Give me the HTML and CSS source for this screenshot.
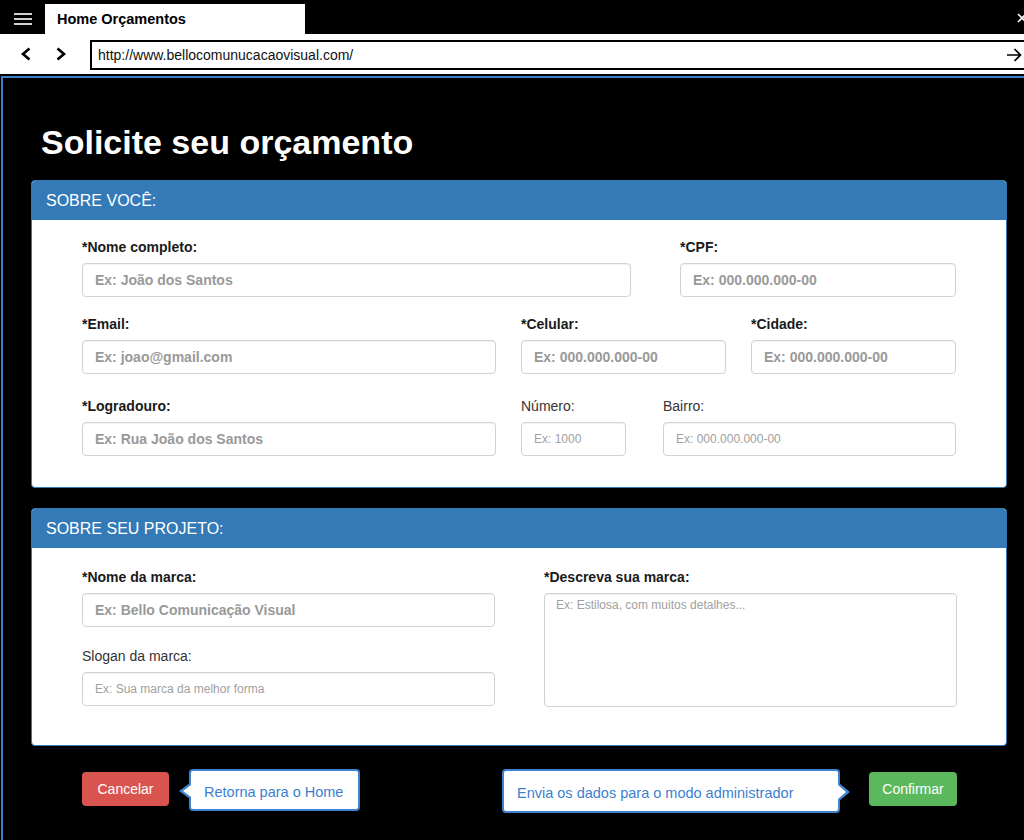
FILE: index.html
```html
<!DOCTYPE html>
<html lang="pt-BR">
<head>
<meta charset="utf-8">
<title>Home Orçamentos</title>
<link rel="stylesheet" href="styles.css">
</head>
<body>
<div class="browser">
  <header class="tabbar">
    <div class="menu"><span></span><span></span><span></span></div>
    <div class="tab">Home Orçamentos</div>
    <svg class="close" width="10" height="10" viewBox="0 0 10 10"><path d="M1 1L9 9M9 1L1 9" stroke="#fff" stroke-width="1.6" fill="none"/></svg>
  </header>
  <nav class="toolbar">
    <svg class="nav-btn back" width="12" height="14" viewBox="0 0 12 14"><polyline points="9.5,1.5 3,7 9.5,12.5" fill="none" stroke="#000" stroke-width="2.6"/></svg>
    <svg class="nav-btn fwd" width="12" height="14" viewBox="0 0 12 14"><polyline points="2.5,1.5 9,7 2.5,12.5" fill="none" stroke="#000" stroke-width="2.6"/></svg>
    <div class="address">
      <span class="url">http://www.bellocomunucacaovisual.com/</span>
      <svg class="go" width="16" height="16" viewBox="0 0 16 16"><path d="M1 8H14.5M8.5 2L14.5 8L8.5 14" fill="none" stroke="#000" stroke-width="1.7"/></svg>
    </div>
  </nav>
  <main class="viewport">
    <h1 class="title">Solicite seu orçamento</h1>

    <section class="panel">
      <div class="panel-heading">SOBRE VOCÊ:</div>
      <div class="panel-body body-about">
        <div class="row row-1">
          <div class="field w-nome"><label class="label">*Nome completo:</label><input class="input" placeholder="Ex: João dos Santos"></div>
          <div class="field w-cpf"><label class="label">*CPF:</label><input class="input" placeholder="Ex: 000.000.000-00"></div>
        </div>
        <div class="row row-2">
          <div class="field w-wide"><label class="label">*Email:</label><input class="input" placeholder="Ex: joao@gmail.com"></div>
          <div class="field w-mid"><label class="label">*Celular:</label><input class="input" placeholder="Ex: 000.000.000-00"></div>
          <div class="field w-mid"><label class="label">*Cidade:</label><input class="input" placeholder="Ex: 000.000.000-00"></div>
        </div>
        <div class="row row-3">
          <div class="field w-wide"><label class="label">*Logradouro:</label><input class="input" placeholder="Ex: Rua João dos Santos"></div>
          <div class="field w-num"><label class="label light">Número:</label><input class="input small" placeholder="Ex: 1000"></div>
          <div class="field w-bairro"><label class="label light">Bairro:</label><input class="input small" placeholder="Ex: 000.000.000-00"></div>
        </div>
      </div>
    </section>

    <section class="panel panel-project">
      <div class="panel-heading">SOBRE SEU PROJETO:</div>
      <div class="panel-body body-project">
        <div class="col">
          <div class="field"><label class="label">*Nome da marca:</label><input class="input" placeholder="Ex: Bello Comunicação Visual"></div>
          <div class="field slogan"><label class="label light">Slogan da marca:</label><input class="input small" placeholder="Ex: Sua marca da melhor forma"></div>
        </div>
        <div class="col">
          <div class="field"><label class="label">*Descreva sua marca:</label><textarea class="input textarea small" placeholder="Ex: Estilosa, com muitos detalhes..."></textarea></div>
        </div>
      </div>
    </section>

    <div class="actions">
      <div class="group">
        <button class="btn btn-cancel">Cancelar</button>
        <div class="tip tip-left">Retorna para o Home</div>
      </div>
      <div class="group">
        <div class="tip tip-right">Envia os dados para o modo administrador</div>
        <button class="btn btn-confirm">Confirmar</button>
      </div>
    </div>
  </main>
</div>
</body>
</html>
```
FILE: styles.css
```css
* { box-sizing: border-box; }

html, body {
  margin: 0;
  padding: 0;
  background: #000;
  font-family: "Liberation Sans", Arial, sans-serif;
}

.browser {
  width: 1024px;
  height: 840px;
  overflow: hidden;
  background: #000;
}

/* ---------- tab bar ---------- */
.tabbar {
  height: 34px;
  display: flex;
  align-items: flex-start;
  background: #000;
  overflow: hidden;
}

.menu {
  width: 45px;
  padding: 13px 0 0 14px;
  display: flex;
  flex-direction: column;
  gap: 3px;
}
.menu span {
  display: block;
  width: 18px;
  height: 2px;
  background: #d0d0d0;
}

.tab {
  margin-top: 4px;
  width: 260px;
  height: 30px;
  background: #fff;
  padding: 1px 0 0 12px;
  line-height: 29px;
  font-size: 14.5px;
  font-weight: bold;
  color: #000;
}

.close {
  margin: 13px -3px 0 auto;
  flex: none;
}

/* ---------- toolbar ---------- */
.toolbar {
  height: 42px;
  background: #fff;
  border-bottom: 2px solid #000;
  display: flex;
  align-items: flex-start;
  overflow: hidden;
}

.nav-btn { flex: none; margin-top: 13px; }
.back { margin-left: 20px; }
.fwd { margin-left: 23px; }

.address {
  flex: none;
  width: 950px;
  margin: 6px 0 0 23px;
  height: 30px;
  border: 2px solid #000;
  display: flex;
  align-items: center;
  padding-left: 6px;
}
.url {
  font-size: 14px;
  color: #111;
}
.go {
  margin-left: auto;
  margin-right: 16px;
  flex: none;
}

/* ---------- viewport ---------- */
.viewport {
  margin-left: 1px;
  border-left: 2px solid #3a7fc9;
  border-top: 2px solid #3a7fc9;
  height: 766px;
  padding: 0 17px 0 28px;
  background: #000;
}

.title {
  margin: 44px 0 18px 10px;
  font-size: 34px;
  line-height: 40px;
  font-weight: bold;
  color: #fff;
}

/* ---------- panels ---------- */
.panel {
  background: #fff;
  border: 1px solid #337ab7;
  border-radius: 4px;
  overflow: hidden;
}
.panel-project { margin-top: 20px; }

.panel-heading {
  height: 39px;
  line-height: 39px;
  background: #337ab7;
  color: #fff;
  font-size: 16px;
  padding: 0 14px;
}

.panel-body {
  padding: 19px 49px 31px 50px;
}

.row {
  display: flex;
  gap: 25px;
}
.row-1 { gap: 49px; }
.row-2 { margin-top: 19px; }
.row-3 { margin-top: 24px; }

.w-nome { width: 549px; }
.w-cpf { width: 276px; }
.w-wide { width: 414px; }
.w-mid { width: 205px; }
.w-num { width: 105px; }
.w-bairro { width: 293px; margin-left: 12px; }

.field {
  display: flex;
  flex-direction: column;
}

.label {
  display: block;
  font-size: 14px;
  line-height: 17px;
  font-weight: bold;
  color: #1a1a1a;
  margin-bottom: 7px;
}
.label.light {
  font-weight: normal;
  color: #333;
}

.input {
  width: 100%;
  height: 34px;
  border: 1px solid #d2d2d2;
  border-radius: 4px;
  box-shadow: inset 0 1px 1px rgba(0,0,0,.06);
  padding: 0 12px;
  font-family: "Liberation Sans", Arial, sans-serif;
  font-size: 14px;
  font-weight: bold;
  color: #555;
  background: #fff;
  outline: none;
}
.input::placeholder {
  color: #999;
  opacity: 1;
}
.input.small {
  font-size: 12px;
  font-weight: normal;
}
.input.small::placeholder { color: #a0a0a0; }

.textarea {
  height: 114px;
  resize: none;
  padding: 3px 11px;
  line-height: 17px;
  display: block;
}

.body-project {
  display: grid;
  grid-template-columns: 413px 413px;
  column-gap: 49px;
  padding: 21px 49px 38px 50px;
}
.slogan { margin-top: 21px; }

/* ---------- actions ---------- */
.actions {
  margin: 23px 50px 0 51px;
  display: flex;
  justify-content: space-between;
  align-items: flex-start;
}

.group {
  display: flex;
  align-items: flex-start;
}

.btn {
  margin-top: 3px;
  height: 34px;
  border: none;
  border-radius: 4px;
  color: #fff;
  font-family: "Liberation Sans", Arial, sans-serif;
  font-size: 14px;
  padding: 0;
  cursor: pointer;
}
.btn-cancel { width: 87px; background: #d9534f; }
.btn-confirm { width: 88px; background: #5cb85c; margin-left: 29px; }

.tip {
  position: relative;
  background: #fff;
  border: 2px solid #3f82cf;
  border-radius: 4px;
  color: #3b7fd0;
  font-size: 14.5px;
  display: flex;
  align-items: center;
  padding: 3px 0 0 13px;
}
.tip-left { width: 171px; height: 42px; margin-left: 20px; }
.tip-right { width: 338px; height: 44px; }

.tip::before,
.tip::after {
  content: "";
  position: absolute;
  width: 0;
  height: 0;
  border-style: solid;
}
.tip-left::before {
  left: -12px;
  top: 12px;
  border-width: 8px 11px 8px 0;
  border-color: transparent #3f82cf transparent transparent;
}
.tip-left::after {
  left: -8px;
  top: 14px;
  border-width: 6px 8px 6px 0;
  border-color: transparent #fff transparent transparent;
}
.tip-right::before {
  right: -12px;
  top: 12px;
  border-width: 9px 0 9px 11px;
  border-color: transparent transparent transparent #3f82cf;
}
.tip-right::after {
  right: -8px;
  top: 14px;
  border-width: 7px 0 7px 8px;
  border-color: transparent transparent transparent #fff;
}
```
